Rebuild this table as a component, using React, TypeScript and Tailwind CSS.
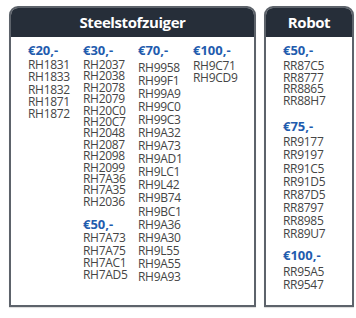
const font = { fontFamily: '"Open Sans", "Noto Sans", sans-serif' };

type Group = { price: string; items: string[] };

function PriceGroup({ group, leading, gap, className = "" }: { group: Group; leading: string; gap: string; className?: string }) {
  return (
    <div className={className}>
      <div className="text-[13px] font-bold leading-[15px] text-[#1f5cae]">{group.price}</div>
      <ul className={`text-[12px] text-[#454545] tracking-[-0.3px] ${leading} ${gap}`}>
        {group.items.map((c) => (
          <li key={c}>{c}</li>
        ))}
      </ul>
    </div>
  );
}

function Panel({ title, className, children }: { title: string; className: string; children: React.ReactNode }) {
  return (
    <div className={`flex flex-col rounded-t-[9px] border-2 border-[#5d636b] bg-white shadow-[0_1px_1px_rgba(0,0,0,0.15)] ${className}`}>
      <div className="flex h-[29px] items-center justify-center rounded-t-[7px] bg-[#262e39]">
        <h2 className="text-[15px] font-bold tracking-[-0.4px] text-white">{title}</h2>
      </div>
      {children}
    </div>
  );
}

export default function App() {
  return (
    <div style={font} className="h-[318px] w-[356px] bg-white pl-[9px] pt-[6px] pr-[2px]">
      <div className="flex h-[301px] gap-[8px]">
        <Panel title="Steelstofzuiger" className="w-[247px]">
          <div className="flex pl-[17px] pt-[6px]">
            <div className="w-[55px]">
              <PriceGroup gap="mt-[1px]" leading="leading-[12.3px]" group={{ price: "€20,-", items: ["RH1831", "RH1833", "RH1832", "RH1871", "RH1872"] }} />
            </div>
            <div className="w-[55px]">
              <PriceGroup
                gap="mt-[1px]"
                leading="leading-[11.4px]"
                group={{
                  price: "€30,-",
                  items: ["RH2037", "RH2038", "RH2078", "RH2079", "RH20C0", "RH20C7", "RH2048", "RH2087", "RH2098", "RH2099", "RH7A36", "RH7A35", "RH2036"],
                }}
              />
              <PriceGroup
                className="mt-[10px]"
                gap="mt-0"
                leading="leading-[12.3px]"
                group={{ price: "€50,-", items: ["RH7A73", "RH7A75", "RH7AC1", "RH7AD5"] }}
              />
            </div>
            <div className="w-[55px]">
              <PriceGroup
                gap="mt-[2.5px]"
                leading="leading-[13.1px]"
                group={{
                  price: "€70,-",
                  items: ["RH9958", "RH99F1", "RH99A9", "RH99C0", "RH99C3", "RH9A32", "RH9A73", "RH9AD1", "RH9LC1", "RH9L42", "RH9B74", "RH9BC1", "RH9A36", "RH9A30", "RH9L55", "RH9A55", "RH9A93"],
                }}
              />
            </div>
            <div className="w-[55px]">
              <PriceGroup gap="mt-[2px]" leading="leading-[12px]" group={{ price: "€100,-", items: ["RH9C71", "RH9CD9"] }} />
            </div>
          </div>
        </Panel>
        <Panel title="Robot" className="w-[90px]">
          <div className="pl-[17px] pt-[6px]">
            <PriceGroup gap="mt-[2px]" leading="leading-[11.7px]" group={{ price: "€50,-", items: ["RR87C5", "RR8777", "RR8865", "RR88H7"] }} />
            <PriceGroup
              className="mt-[12px]"
              gap="mt-[1.5px]"
              leading="leading-[13.1px]"
              group={{ price: "€75,-", items: ["RR9177", "RR9197", "RR91C5", "RR91D5", "RR87D5", "RR8797", "RR8985", "RR89U7"] }}
            />
            <PriceGroup className="mt-[8px]" gap="mt-[1.5px]" leading="leading-[13px]" group={{ price: "€100,-", items: ["RR95A5", "RR9547"] }} />
          </div>
        </Panel>
      </div>
    </div>
  );
}
